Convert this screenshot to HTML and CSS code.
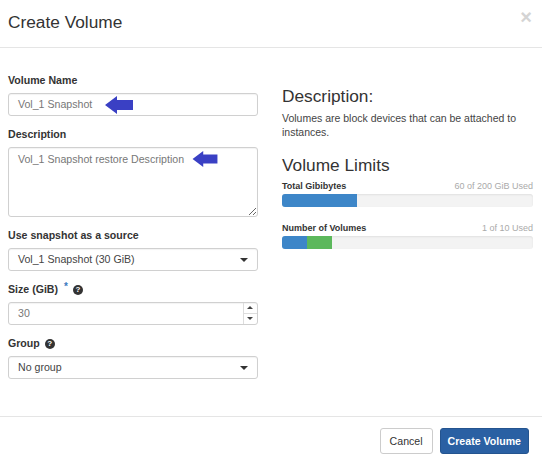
FILE: index.html
```html
<!DOCTYPE html>
<html lang="en">
<head>
    <meta charset="UTF-8">
    <title>Create Volume</title>
    <link rel="stylesheet" href="styles.css">
</head>
<body>
    <div class="modal">
        <!-- Cabecera -->
        <div class="modal-header">
            <h1>Create Volume</h1>
            <span class="close">&times;</span>
        </div>

        <div class="modal-body">
            <!-- Formulario -->
            <div class="form-col">
                <div class="form-group">
                    <label>Volume Name</label>
                    <div class="field-wrap">
                        <div class="form-control">Vol_1 Snapshot</div>
                        <svg class="arrow arrow-name" width="28" height="18" viewBox="0 0 28 18">
                            <polygon points="0,9 12,0 12,4 28,4 28,14 12,14 12,18" fill="#3a40c4"/>
                        </svg>
                    </div>
                </div>

                <div class="form-group">
                    <label>Description</label>
                    <div class="field-wrap">
                        <textarea class="form-control text-area" readonly>Vol_1 Snapshot restore Description</textarea>
                        <svg class="arrow arrow-desc" width="26" height="16" viewBox="0 0 28 18">
                            <polygon points="0,9 12,0 12,4 28,4 28,14 12,14 12,18" fill="#3a40c4"/>
                        </svg>
                    </div>
                </div>

                <div class="form-group">
                    <label>Use snapshot as a source</label>
                    <div class="form-control select">
                        <span class="dark">Vol_1 Snapshot (30 GiB)</span>
                        <span class="caret"></span>
                    </div>
                </div>

                <div class="form-group">
                    <label>Size (GiB) <span class="req">*</span> <span class="help">?</span></label>
                    <div class="form-control number">
                        <span>30</span>
                        <span class="spinner">
                            <span class="spin-up"></span>
                            <span class="spin-down"></span>
                        </span>
                    </div>
                </div>

                <div class="form-group">
                    <label>Group <span class="help">?</span></label>
                    <div class="form-control select">
                        <span class="dark">No group</span>
                        <span class="caret"></span>
                    </div>
                </div>
            </div>

            <!-- Información -->
            <div class="info-col">
                <h2>Description:</h2>
                <p>Volumes are block devices that can be attached to instances.</p>

                <h2 class="limits-title">Volume Limits</h2>

                <div class="quota">
                    <div class="quota-head">
                        <strong>Total Gibibytes</strong>
                        <span>60 of 200 GiB Used</span>
                    </div>
                    <div class="bar">
                        <div class="fill blue" style="width: 30%"></div>
                    </div>
                </div>

                <div class="quota">
                    <div class="quota-head">
                        <strong>Number of Volumes</strong>
                        <span>1 of 10 Used</span>
                    </div>
                    <div class="bar">
                        <div class="fill blue" style="width: 10%"></div>
                        <div class="fill green" style="width: 10%"></div>
                    </div>
                </div>
            </div>
        </div>

        <!-- Pie -->
        <div class="modal-footer">
            <button class="btn btn-default">Cancel</button>
            <button class="btn btn-primary">Create Volume</button>
        </div>
    </div>
</body>
</html>
```

FILE: styles.css
```css
body {
    margin: 0;
    padding: 0;
    background-color: #fff;
    font-family: 'Liberation Sans', Arial, sans-serif;
    color: #333;
}

.modal {
    width: 542px;
    height: 464px;
    display: flex;
    flex-direction: column;
}

.modal-header {
    display: flex;
    justify-content: space-between;
    align-items: center;
    height: 47px;
    padding: 0 10px 0 8px;
    border-bottom: 1px solid #e5e5e5;
    flex-shrink: 0;
}

.modal-header h1 {
    margin: 0 0 3px 0;
    font-size: 17.3px;
    font-weight: 400;
    color: #333;
}

.close {
    font-size: 20px;
    font-weight: 700;
    color: #d4d4d4;
    margin-bottom: 12px;
}

.modal-body {
    display: flex;
    gap: 24px;
    padding: 24px 9px 0 8px;
    height: 368px;
    box-sizing: border-box;
    flex-shrink: 0;
}

.form-col {
    width: 250px;
}

.info-col {
    width: 251px;
    padding-top: 13px;
}

.form-group {
    margin-bottom: 10px;
}

.form-group label {
    display: flex;
    align-items: center;
    gap: 3px;
    font-size: 10.6px;
    font-weight: 700;
    line-height: 17px;
    margin-bottom: 4px;
}

.req {
    font-size: 10px;
    color: #3a7ac0;
    margin-left: 3px;
    align-self: flex-start;
    line-height: 12px;
}

.help {
    display: inline-block;
    width: 10px;
    height: 10px;
    border-radius: 50%;
    background-color: #333;
    color: #fff;
    font-size: 8px;
    line-height: 10px;
    text-align: center;
    margin-left: 2px;
}

.field-wrap {
    position: relative;
}

.form-control {
    box-sizing: border-box;
    width: 250px;
    height: 23px;
    border: 1px solid #d0d0d0;
    border-radius: 3px;
    padding: 0 9px;
    font-family: 'Liberation Sans', Arial, sans-serif;
    font-size: 10.6px;
    line-height: 21px;
    color: #777;
    background-color: #fff;
    box-shadow: inset 0 1px 1px rgba(0, 0, 0, 0.05);
}

.text-area {
    display: block;
    height: 70px;
    padding: 3px 9px;
    resize: vertical;
    line-height: 16px;
}

.arrow {
    position: absolute;
}

.arrow-name {
    left: 97px;
    top: 3px;
}

.arrow-desc {
    left: 184px;
    top: 4px;
}

.select,
.number {
    display: flex;
    justify-content: space-between;
    align-items: center;
}

.dark {
    color: #444;
}

.caret {
    width: 0;
    height: 0;
    border-left: 4px solid transparent;
    border-right: 4px solid transparent;
    border-top: 4px solid #333;
    margin-right: 0;
}

.number {
    padding-right: 0;
}

.spinner {
    display: flex;
    flex-direction: column;
    width: 13px;
    height: 21px;
    border-left: 1px solid #ddd;
}

.spin-up,
.spin-down {
    flex: 1;
    position: relative;
}

.spin-up {
    border-bottom: 1px solid #ddd;
}

.spin-up::after,
.spin-down::after {
    content: "";
    position: absolute;
    left: 3px;
    top: 3px;
    border-left: 3px solid transparent;
    border-right: 3px solid transparent;
}

.spin-up::after {
    border-bottom: 3px solid #444;
}

.spin-down::after {
    border-top: 3px solid #444;
}

h2 {
    margin: 0;
    font-size: 17.3px;
    font-weight: 400;
    line-height: 22px;
    color: #333;
}

.info-col p {
    margin: 4px 0 0 0;
    font-size: 10.5px;
    line-height: 14px;
    color: #444;
}

.limits-title {
    margin-top: 15px;
    margin-bottom: 5px;
}

.quota {
    margin-bottom: 16px;
}

.quota-head {
    display: flex;
    justify-content: space-between;
    font-size: 9px;
    line-height: 11px;
}

.quota-head strong {
    color: #333;
}

.quota-head span {
    color: #aaa;
}

.bar {
    display: flex;
    height: 13px;
    margin-top: 2px;
    background-color: #f3f3f3;
    border-radius: 3px;
    overflow: hidden;
    box-shadow: inset 0 1px 2px rgba(0, 0, 0, 0.08);
}

.fill.blue {
    background-color: #3d86c8;
}

.fill.green {
    background-color: #5cb85c;
}

.modal-footer {
    display: flex;
    justify-content: flex-end;
    gap: 7px;
    border-top: 1px solid #e5e5e5;
    padding: 11px 13px 0 0;
}

.btn {
    height: 26px;
    border-radius: 3px;
    font-family: 'Liberation Sans', Arial, sans-serif;
    font-size: 10.6px;
    padding: 0 9px;
    cursor: pointer;
}

.btn-default {
    background-color: #fff;
    border: 1px solid #ccc;
    color: #333;
}

.btn-primary {
    background-color: #2a60a3;
    border: 1px solid #24548f;
    color: #fff;
    font-weight: 700;
    padding: 0 7px;
}
```
